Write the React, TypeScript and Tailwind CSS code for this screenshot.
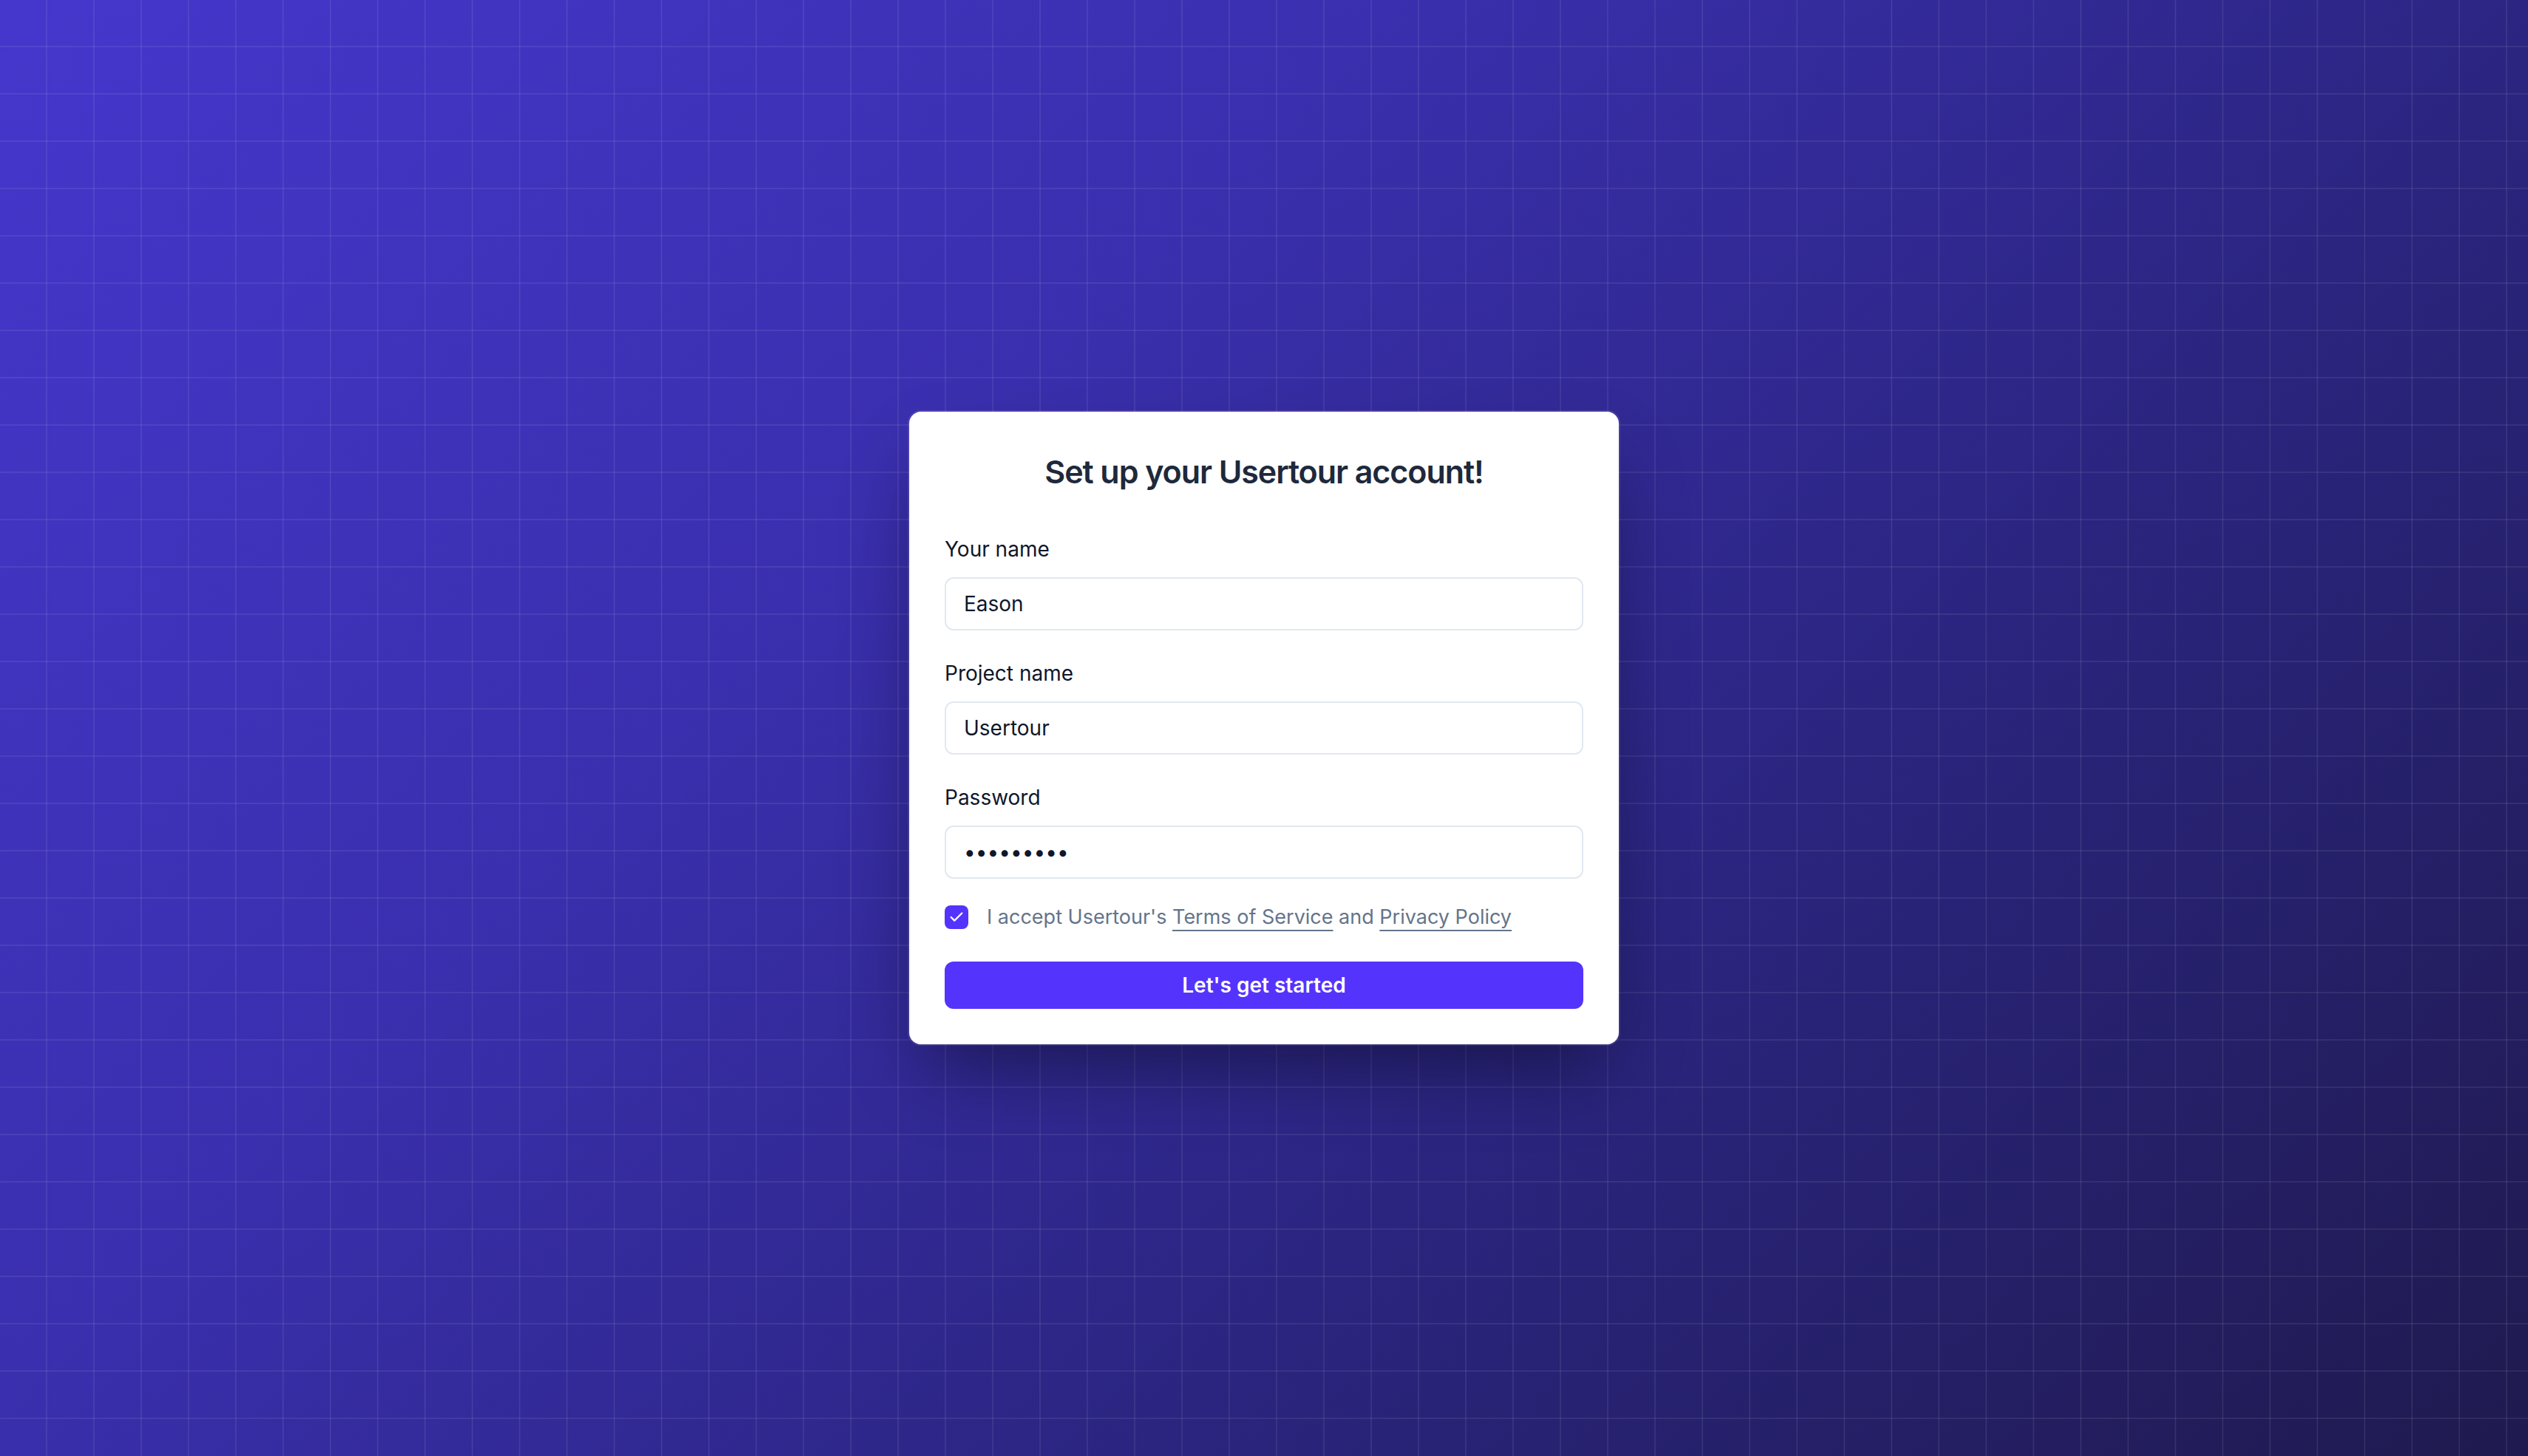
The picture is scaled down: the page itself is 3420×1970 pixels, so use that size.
import React, { FC } from 'react';

type FieldProps = {
    label: string;
    value: string;
    type?: string;
};

const Field: FC<FieldProps> = ({ label, value, type = 'text' }) => {
    return (
        <div className="flex flex-col">
            <label className="text-[28px] leading-[40px] font-normal text-[#0f172a]">
                {label}
            </label>
            <input
                type={type}
                defaultValue={value}
                className="mt-[18px] h-[72px] w-full rounded-[12px] border-2 border-[#e2e8f0] bg-white px-[24px] text-[28px] text-[#0f172a] outline-none"
            />
        </div>
    );
};

const CheckIcon = () => (
    <svg
        viewBox="0 0 24 24"
        className="h-[22px] w-[22px]"
        fill="none"
        stroke="white"
        strokeWidth={2.5}
        strokeLinecap="round"
        strokeLinejoin="round"
    >
        <polyline points="20 6 9 17 4 12" />
    </svg>
);

export default function App() {
    return (
        <div
            className="flex h-screen w-full items-center justify-center bg-[linear-gradient(to_right,rgba(255,255,255,0.07)_2px,transparent_2px),linear-gradient(to_bottom,rgba(255,255,255,0.07)_2px,transparent_2px),linear-gradient(135deg,#4537cc_0%,#3a2fae_35%,#2b2580_65%,#1f1a4e_100%)] [background-size:64px_64px,64px_64px,100%_100%] [background-position:-2px_-2px,-2px_-2px,0_0]"
            style={{ fontFamily: 'Inter, "Noto Sans", sans-serif' }}
        >
            <div className="w-[960px] rounded-[16px] bg-white px-[48px] pt-[53px] pb-[48px] ring-2 ring-white/10 shadow-[0_50px_100px_-24px_rgba(0,0,0,0.45)]">
                <h1 className="text-center text-[43px] leading-[56px] font-semibold tracking-tight text-[#1e293b]">
                    Set up your Usertour account!
                </h1>

                <div className="mt-[57px] flex flex-col gap-[38px]">
                    <Field label="Your name" value="Eason" />
                    <Field label="Project name" value="Usertour" />
                    <Field label="Password" value="123456789" type="password" />
                </div>

                <div className="mt-[32px] flex h-[40px] items-center gap-[25px]">
                    <div className="flex h-[32px] w-[32px] items-center justify-center rounded-[8px] bg-[#5434fc]">
                        <CheckIcon />
                    </div>
                    <p className="text-[27px] leading-[40px] text-[#64748b]">
                        I accept Usertour's{' '}
                        <a className="underline decoration-[2px] underline-offset-[8px]">
                            Terms of Service
                        </a>{' '}
                        and{' '}
                        <a className="underline decoration-[2px] underline-offset-[8px]">
                            Privacy Policy
                        </a>
                    </p>
                </div>

                <button className="mt-[40px] flex h-[64px] w-full items-center justify-center rounded-[12px] bg-[#5434fc] text-[28px] font-semibold text-white">
                    Let's get started
                </button>
            </div>
        </div>
    );
}
